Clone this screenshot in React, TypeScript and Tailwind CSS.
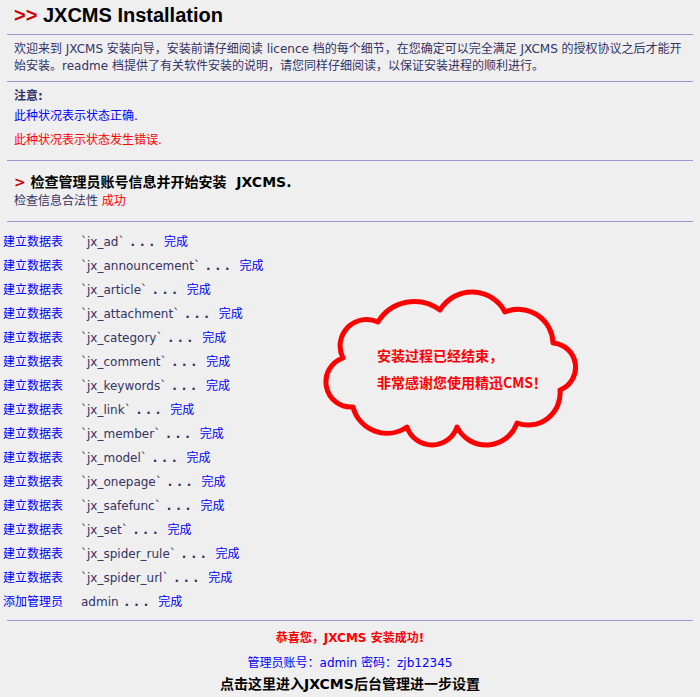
import React from "react";

const tables = [
  "ad",
  "announcement",
  "article",
  "attachment",
  "category",
  "comment",
  "keywords",
  "link",
  "member",
  "model",
  "onepage",
  "safefunc",
  "set",
  "spider_rule",
  "spider_url",
];

// Cloud outline: notches between bumps (page coords) and each bump's depth.
const notches: [number, number][] = [
  [353, 407],
  [343, 358],
  [378, 322],
  [440, 310],
  [505, 312],
  [553, 343],
  [560, 390],
  [517, 423],
  [457, 427],
  [407, 427],
];
const depths = [22, 18, 14, 19, 15, 19, 15, 20, 18, 15];
const OX = 320;
const OY = 285;

function cloudPath(): string {
  const p = notches.map(([x, y]) => [x - OX, y - OY]);
  let d = `M ${p[0][0]} ${p[0][1]}`;
  for (let i = 0; i < p.length; i++) {
    const a = p[i];
    const b = p[(i + 1) % p.length];
    const c = Math.hypot(b[0] - a[0], b[1] - a[1]);
    const s = depths[i];
    const r = (c * c) / 4 / (2 * s) + s / 2;
    const large = s > c / 2 ? 1 : 0;
    d += ` A ${r.toFixed(2)} ${r.toFixed(2)} 0 ${large} 1 ${b[0]} ${b[1]}`;
  }
  return d + " Z";
}

const CLOUD_D = cloudPath();

function Rule() {
  return <div className="mx-[7px] h-px bg-[#9999cc]" />;
}

function Row({ label, name }: { label: string; name: string }) {
  return (
    <div className="flex h-6 items-center whitespace-pre pt-px">
      <span className="w-[78px] text-[#0000ff]">{label}</span>
      <span>{name}</span>
      <span className="ml-[6px] font-bold tracking-[5px]">...</span>
      <span className="ml-[5px] text-[#0000ff]">完成</span>
    </div>
  );
}

export default function App() {
  return (
    <div
      className="min-h-[697px] bg-[#efefef] text-[12px] text-[#333366]"
      style={{ fontFamily: '"DejaVu Sans", "Noto Sans CJK SC", sans-serif' }}
    >
      {/* Title */}
      <div
        className="h-[34px] pl-[14px] pt-[3px] text-[20px] font-bold leading-[24px] text-black"
        style={{ fontFamily: '"Liberation Sans", "Noto Sans CJK SC", sans-serif' }}
      >
        <span className="text-[#cc0000]">&gt;&gt;</span> JXCMS Installation
      </div>
      <Rule />

      {/* Intro */}
      <p className="pl-[14px] pr-[12px] pt-[6px] pb-[6px] leading-[17px]">
        欢迎来到 JXCMS 安装向导，安装前请仔细阅读 licence 档的每个细节，在您确定可以完全满足 JXCMS 的授权协议之后才能开始安装。readme 档提供了有关软件安装的说明，请您同样仔细阅读，以保证安装进程的顺利进行。
      </p>
      <Rule />

      {/* Notes */}
      <div className="px-[14px] pt-[4px] pb-[10px]">
        <div className="font-bold leading-[20px]">注意:</div>
        <div className="leading-[20px] text-[#0000ff]">此种状况表示状态正确.</div>
        <div className="mt-[4px] leading-[20px] text-[#ff0000]">此种状况表示状态发生错误.</div>
      </div>
      <Rule />

      {/* Admin check */}
      <div className="px-[14px] pt-[11px] pb-[11px]">
        <div className="text-[14px] font-bold leading-[20px] text-black">
          <span className="text-[#cc0000]">&gt;</span> 检查管理员账号信息并开始安装&nbsp; JXCMS.
        </div>
        <div className="leading-[18px]">
          检查信息合法性 <span className="text-[#ff0000]">成功</span>
        </div>
      </div>
      <Rule />

      {/* Table creation log */}
      <div className="relative pl-[3px] pt-[7px] pb-[7px]">
        {tables.map((t) => (
          <Row key={t} label="建立数据表" name={`\`jx_${t}\``} />
        ))}
        <Row label="添加管理员" name="admin" />

        <div className="absolute left-[320px] top-[63px] h-[170px] w-[265px]">
          <svg width="265" height="170" viewBox="0 0 265 170" className="absolute inset-0">
            <path d={CLOUD_D} fill="none" stroke="#ff0000" strokeWidth="5" strokeLinejoin="round" />
          </svg>
          <div
            className="absolute left-[57px] top-[57px] whitespace-nowrap text-[14px] font-bold leading-[27px] text-[#ff0000]"
            style={{ fontFamily: '"Noto Sans CJK SC", sans-serif' }}
          >
            <div>安装过程已经结束，</div>
            <div>非常感谢您使用精迅CMS！</div>
          </div>
        </div>
      </div>
      <Rule />

      {/* Result */}
      <div className="pt-[7px] text-center">
        <div className="font-bold leading-[20px] text-[#ff0000]">恭喜您，JXCMS 安装成功!</div>
        <div className="mt-[5px] leading-[20px] text-[#0000ff]">管理员账号：admin 密码：zjb12345</div>
        <div className="mt-px text-[14px] font-bold leading-[20px] text-black">点击这里进入JXCMS后台管理进一步设置</div>
      </div>
    </div>
  );
}
